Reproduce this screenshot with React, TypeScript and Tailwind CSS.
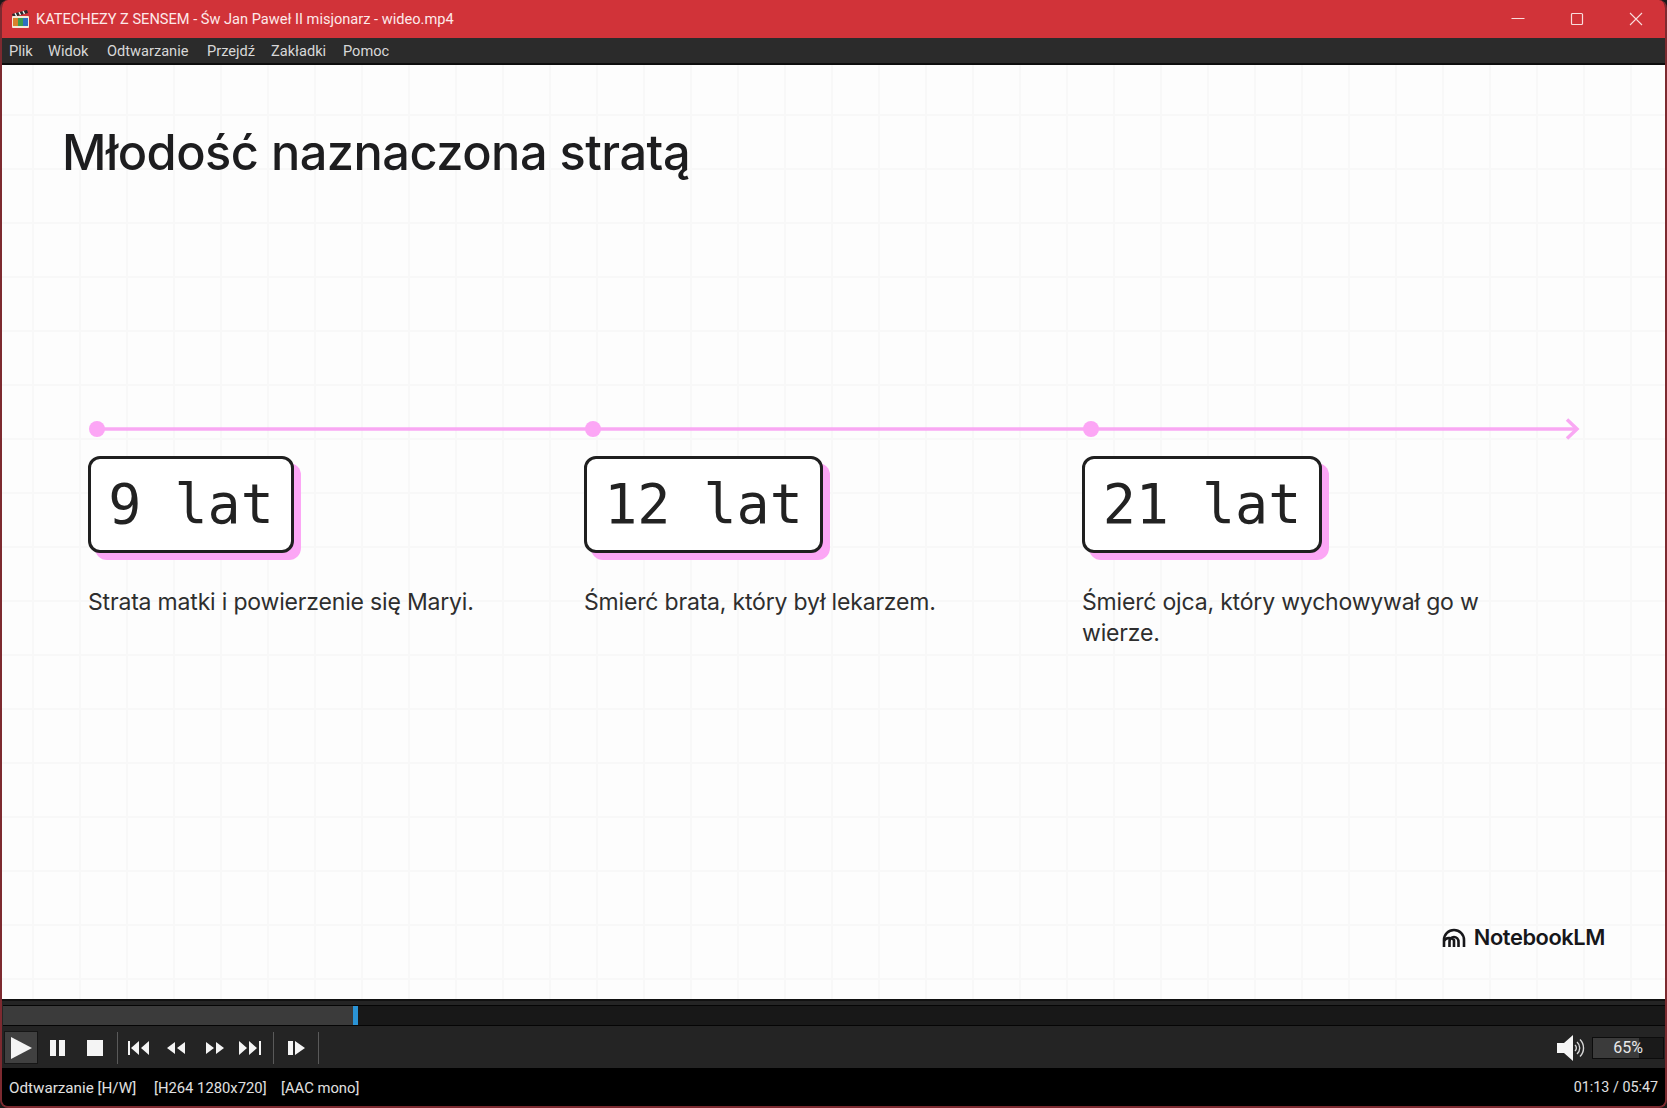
import React from "react";

const UI_FONT = "font-['Roboto','Liberation_Sans',sans-serif]";

const menuItems = [
  { label: "Plik", width: "w-[39px]" },
  { label: "Widok", width: "w-[59px]" },
  { label: "Odtwarzanie", width: "w-[100px]" },
  { label: "Przejdź", width: "w-[64px]" },
  { label: "Zakładki", width: "w-[72px]" },
  { label: "Pomoc", width: "w-[60px]" },
];

const milestones = [
  { age: "9 lat", box: "w-[206px]", text: "Strata matki i powierzenie się Maryi." },
  { age: "12 lat", box: "w-[239px]", text: "Śmierć brata, który był lekarzem." },
  { age: "21 lat", box: "w-[240px]", text: "Śmierć ojca, który wychowywał go w wierze." },
];

const AppIcon = () => (
  <svg width="20" height="20" viewBox="0 0 20 20" className="shrink-0">
    <path d="M2 5 L17 1 L18 4 L3 8 Z" fill="#2b2b2b" />
    <path d="M5 4.2 L6.5 7 M9 3.2 L10.5 6 M13 2.2 L14.5 5" stroke="#f4f4f4" strokeWidth="1.4" />
    <rect x="2" y="7" width="17" height="12" rx="1" fill="#f3ead8" />
    <rect x="3" y="9" width="5" height="8" fill="#d9822b" />
    <rect x="8" y="9" width="5" height="8" fill="#3f9d4a" />
    <rect x="13" y="9" width="5" height="8" fill="#2f6fc0" />
  </svg>
);

const TitleBar = () => (
  <div className="h-[38px] bg-[#d13339] flex items-center text-white">
    <div className="pl-[8px] pr-[6px] flex items-center">
      <AppIcon />
    </div>
    <span className={`${UI_FONT} text-[14.6px] text-[#fde9e9] flex-1 pt-[2px]`}>
      KATECHEZY Z SENSEM - Św Jan Paweł II misjonarz - wideo.mp4
    </span>
    <div className="flex items-center">
      <div className="w-[59px] flex justify-center">
        <svg width="14" height="14" viewBox="0 0 14 14">
          <path d="M0.5 6.5 H13.5" stroke="#f9dcdc" strokeWidth="1" />
        </svg>
      </div>
      <div className="w-[59px] flex justify-center">
        <svg width="14" height="14" viewBox="0 0 14 14">
          <rect x="1.5" y="1.5" width="11" height="11" rx="1" fill="none" stroke="#f9dcdc" strokeWidth="1.2" />
        </svg>
      </div>
      <div className="w-[59px] flex justify-center">
        <svg width="14" height="14" viewBox="0 0 14 14">
          <path d="M1 1 L13 13 M13 1 L1 13" stroke="#f9dcdc" strokeWidth="1.1" />
        </svg>
      </div>
    </div>
  </div>
);

const MenuBar = () => (
  <div className="h-[27px] bg-[#2b2b2b] border-b-2 border-[#0d0d0d] flex items-center pl-[7px] pt-[3px]">
    {menuItems.map((item) => (
      <span key={item.label} className={`${UI_FONT} ${item.width} text-[14.6px] text-[#d8d8d8]`}>
        {item.label}
      </span>
    ))}
  </div>
);

const TimelineLine = () => (
  <svg width="1500" height="26" viewBox="0 0 1500 26" className="block">
    <path d="M9 13 H1488" stroke="#f9a8f3" strokeWidth="3.5" />
    <path d="M1479 3.5 L1489 13 L1479 22.5" fill="none" stroke="#f9a8f3" strokeWidth="3.5" />
    <circle cx="9" cy="13" r="8" fill="#fca6f5" />
    <circle cx="505" cy="13" r="8" fill="#fca6f5" />
    <circle cx="1003" cy="13" r="8" fill="#fca6f5" />
  </svg>
);

const Slide = () => (
  <div className="h-[934px] bg-[#fdfdfd] bg-[linear-gradient(to_right,#f8f8f8_2px,transparent_2px),linear-gradient(to_bottom,#f8f8f8_2px,transparent_2px)] bg-[size:47px_54px] bg-[position:30px_49px] flex flex-col font-['Inter',sans-serif]">
    <h1 className="pl-[60px] pt-[57px] text-[48.7px] leading-[62px] font-medium tracking-[-0.5px] text-[#1d1d1f]">
      Młodość naznaczona stratą
    </h1>
    <div className="pl-[86px] mt-[232px]">
      <TimelineLine />
      <div className="grid grid-cols-[496px_498px_1fr] mt-[14px]">
        {milestones.map((m) => (
          <div key={m.age}>
            <div
              className={`${m.box} h-[97px] bg-white border-[3px] border-[#1f1f1f] rounded-[12px] shadow-[7px_7px_0_#fca6f5] flex items-center justify-center font-['DejaVu_Sans_Mono',monospace] text-[55px] text-[#222] whitespace-pre`}
            >
              {m.age}
            </div>
            <p className="mt-[34px] w-[420px] text-[23px] leading-[31px] tracking-[-0.18px] text-[#2e2e2e]">{m.text}</p>
          </div>
        ))}
      </div>
    </div>
    <div className="mt-auto mb-[45px] mr-[60px] self-end flex items-center gap-[8px]">
      <svg width="24" height="20" viewBox="0 0 24 20">
        <path
          d="M2 19 V12 A10 10 0 0 1 22 12 V19 M7.5 19 V14 A4.5 5 0 0 1 16.5 14 V19 M2 13 A6 5.5 0 0 1 12 12 V19"
          fill="none"
          stroke="#17171a"
          strokeWidth="2.6"
        />
      </svg>
      <span className="text-[21.8px] font-semibold tracking-[-0.4px] text-[#17171a]">NotebookLM</span>
    </div>
  </div>
);

const SeekBar = () => (
  <div className="h-[28px] bg-[#242424] pt-[4px] pb-[1px] border-t-2 border-[#111]">
    <div className="h-full border-y border-[#050505] bg-[#181818] flex ml-px">
      <div className="w-[350px] bg-[#3b3b3b]" />
      <div className="w-[5px] bg-[#2a93d5]" />
    </div>
  </div>
);

const Separator = () => <div className="w-px h-[32px] bg-[#5a5a5a]" />;

const Glyph = ({ d, width, className }: { d: string; width: number; className: string }) => (
  <svg width={width} height="16" viewBox={`0 0 ${width} 16`} className={className}>
    <path d={d} fill="#f4f4f4" />
  </svg>
);

const Controls = () => (
  <div className="h-[41px] bg-[#242424] flex items-center pl-[2px]">
    <div className="w-[34px] h-[33px] bg-[#404040] border border-[#161616] flex items-center justify-center">
      <svg width="22" height="22" viewBox="0 0 22 22">
        <path d="M1 0 L22 11 L1 22 Z" fill="#f4f4f4" />
      </svg>
    </div>
    <Glyph d="M0 0 H6 V16 H0 Z M9 0 H15 V16 H9 Z" width={15} className="ml-[12px]" />
    <Glyph d="M0 0 H16 V16 H0 Z" width={16} className="ml-[22px]" />
    <div className="ml-[14px]"><Separator /></div>
    <Glyph d="M0 1 H2 V15 H0 Z M11 1 V15 L3 8 Z M21 1 V15 L13 8 Z" width={22} className="ml-[10px]" />
    <Glyph d="M8 2 V14 L0 8 Z M18 2 V14 L10 8 Z" width={18} className="ml-[17px]" />
    <Glyph d="M0 2 V14 L8 8 Z M10 2 V14 L18 8 Z" width={18} className="ml-[21px]" />
    <Glyph d="M0 1 V15 L8 8 Z M10 1 V15 L18 8 Z M20 1 H22 V15 H20 Z" width={22} className="ml-[15px]" />
    <div className="ml-[12px]"><Separator /></div>
    <Glyph d="M0 1 H5 V15 H0 Z M7 1 V15 L17 8 Z" width={17} className="ml-[14px]" />
    <div className="ml-[13px]"><Separator /></div>
    <div className="flex-1" />
    <svg width="29" height="28" viewBox="0 0 29 28" className="mr-[6px]">
      <path d="M0 9 H7 L16 1 V27 L7 19 H0 Z" fill="#f6f6f6" />
      <path
        d="M18 11 A4 4 0 0 1 18 17 M20 8 A8 8 0 0 1 20 20 M23 5.5 A12 12 0 0 1 23 22.5"
        fill="none"
        stroke="#d6d6d6"
        strokeWidth="1.4"
      />
    </svg>
    <div className={`${UI_FONT} relative w-[72px] h-[22px] mr-px bg-[#1a1a1a] border border-[#0c0c0c] flex items-center justify-center text-[16px] text-[#e8e8e8]`}>
      <div className="absolute left-0 top-0 bottom-0 w-[65%] bg-[#3b3b3b]" />
      <span className="relative">65%</span>
    </div>
  </div>
);

const StatusBar = () => (
  <div className={`${UI_FONT} h-[38px] bg-black flex items-center pl-[7px] pr-[7px] pt-[2px] text-[#e0e0e0]`}>
    <span className="w-[145px] text-[15.2px]">Odtwarzanie [H/W]</span>
    <span className="w-[127px] text-[14.8px]">[H264 1280x720]</span>
    <span className="flex-1 text-[14.8px]">[AAC mono]</span>
    <span className="text-[14.3px]">01:13 / 05:47</span>
  </div>
);

export default function App() {
  return (
    <div className="w-[1667px] h-[1108px] bg-[#1a1a1a] overflow-hidden">
      <div className="h-full rounded-[8px] overflow-hidden border-x-2 border-b-2 border-[#7d2a30] flex flex-col">
        <TitleBar />
        <MenuBar />
        <Slide />
        <SeekBar />
        <Controls />
        <StatusBar />
      </div>
    </div>
  );
}
